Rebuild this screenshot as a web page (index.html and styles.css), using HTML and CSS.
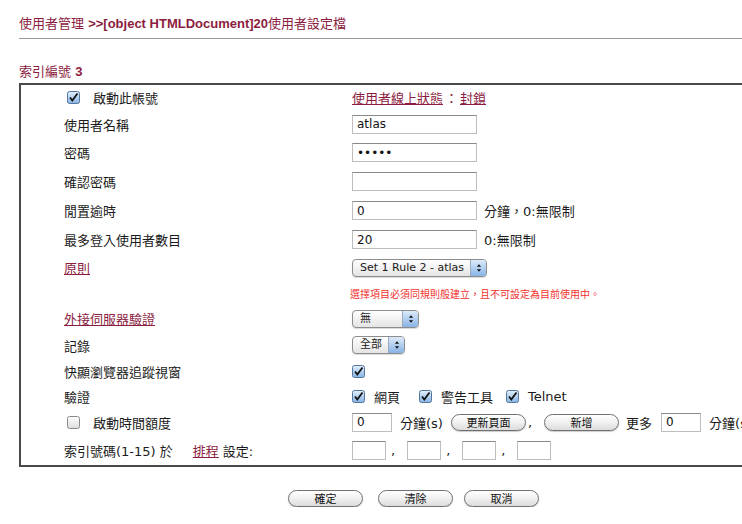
FILE: index.html
```html
<!DOCTYPE html>
<html>

<head>
  <meta charset="utf-8" />
  <title>使用者設定檔</title>
  <link rel="stylesheet" href="styles.css">
</head>

<body>
  <div class="page">
    <div class="title">使用者管理 <b>&gt;&gt;[object HTMLDocument]20</b>使用者設定檔</div>
    <div class="rule"></div>
    <div class="section">索引編號 <b>3</b></div>

    <div class="box">
      <div class="row r1">
        <div class="label check-label">
          <svg class="cb" viewBox="0 0 13 13"><defs><linearGradient id="g1" x1="0" y1="0" x2="0" y2="1"><stop offset="0" stop-color="#e4f0fb"/><stop offset="1" stop-color="#86b3e3"/></linearGradient></defs><rect x="0.5" y="0.5" width="12" height="12" rx="2" fill="url(#g1)" stroke="#55779e"/><path d="M3 6.5 L5.3 9.5 L10.5 2.5" fill="none" stroke="#111" stroke-width="1.8"/></svg>
          <span>啟動此帳號</span>
        </div>
        <div class="value">
          <a href="#" class="link">使用者線上狀態</a><span class="colon">：</span><a href="#" class="link">封鎖</a>
        </div>
      </div>
      <div class="row r2">
        <div class="label">使用者名稱</div>
        <div class="value"><input class="text" type="text" value="atlas"></div>
      </div>
      <div class="row r3">
        <div class="label">密碼</div>
        <div class="value"><input class="text" type="password" value="atlas"></div>
      </div>
      <div class="row r3">
        <div class="label">確認密碼</div>
        <div class="value"><input class="text" type="text" value=""></div>
      </div>
      <div class="row r3">
        <div class="label">閒置逾時</div>
        <div class="value"><input class="text" type="text" value="0"><span class="hint">分鐘，0:無限制</span></div>
      </div>
      <div class="row r3">
        <div class="label">最多登入使用者數目</div>
        <div class="value"><input class="text" type="text" value="20"><span class="hint">0:無限制</span></div>
      </div>
      <div class="row r7">
        <div class="label"><a href="#" class="link">原則</a></div>
        <div class="value">
          <div class="select sel-rule"><span class="sel-text">Set 1 Rule 2 - atlas</span><span class="sel-arrow"><svg viewBox="0 0 7 11"><path d="M3.5 1 L6 4 L1 4 Z M3.5 10 L6 7 L1 7 Z" fill="#111"/></svg></span></div>
        </div>
      </div>
      <div class="row r8">
        <div class="label"></div>
        <div class="value note">選擇項目必須同規則般建立，且不可設定為目前使用中。</div>
      </div>
      <div class="row r9">
        <div class="label"><a href="#" class="link">外接伺服器驗證</a></div>
        <div class="value">
          <div class="select sel-none"><span class="sel-text">無</span><span class="sel-arrow"><svg viewBox="0 0 7 11"><path d="M3.5 1 L6 4 L1 4 Z M3.5 10 L6 7 L1 7 Z" fill="#111"/></svg></span></div>
        </div>
      </div>
      <div class="row r10">
        <div class="label">記錄</div>
        <div class="value">
          <div class="select sel-all"><span class="sel-text">全部</span><span class="sel-arrow"><svg viewBox="0 0 7 11"><path d="M3.5 1 L6 4 L1 4 Z M3.5 10 L6 7 L1 7 Z" fill="#111"/></svg></span></div>
        </div>
      </div>
      <div class="row r11">
        <div class="label">快顯瀏覽器追蹤視窗</div>
        <div class="value">
          <svg class="cb" viewBox="0 0 13 13"><rect x="0.5" y="0.5" width="12" height="12" rx="2" fill="url(#g1)" stroke="#55779e"/><path d="M3 6.5 L5.3 9.5 L10.5 2.5" fill="none" stroke="#111" stroke-width="1.8"/></svg>
        </div>
      </div>
      <div class="row r12">
        <div class="label">驗證</div>
        <div class="value">
          <svg class="cb" viewBox="0 0 13 13"><rect x="0.5" y="0.5" width="12" height="12" rx="2" fill="url(#g1)" stroke="#55779e"/><path d="M3 6.5 L5.3 9.5 L10.5 2.5" fill="none" stroke="#111" stroke-width="1.8"/></svg>
          <span class="opt web">網頁</span>
          <svg class="cb" viewBox="0 0 13 13"><rect x="0.5" y="0.5" width="12" height="12" rx="2" fill="url(#g1)" stroke="#55779e"/><path d="M3 6.5 L5.3 9.5 L10.5 2.5" fill="none" stroke="#111" stroke-width="1.8"/></svg>
          <span class="opt alert">警告工具</span>
          <svg class="cb" viewBox="0 0 13 13"><rect x="0.5" y="0.5" width="12" height="12" rx="2" fill="url(#g1)" stroke="#55779e"/><path d="M3 6.5 L5.3 9.5 L10.5 2.5" fill="none" stroke="#111" stroke-width="1.8"/></svg>
          <span class="opt">Telnet</span>
        </div>
      </div>
      <div class="row r13">
        <div class="label check-label">
          <svg class="cb" viewBox="0 0 13 13"><defs><linearGradient id="g2" x1="0" y1="0" x2="0" y2="1"><stop offset="0" stop-color="#ffffff"/><stop offset="1" stop-color="#dcdcdc"/></linearGradient></defs><rect x="0.5" y="0.5" width="12" height="12" rx="2" fill="url(#g2)" stroke="#8a8a8a"/></svg>
          <span>啟動時間額度</span>
        </div>
        <div class="value">
          <input class="text small" type="text" value="0">
          <span class="unit">分鐘(s)</span>
          <button class="pill pill-s">更新頁面</button>
          <span class="comma">,</span>
          <button class="pill pill-s add">新增</button>
          <span class="more">更多</span>
          <input class="text small" type="text" value="0">
          <span class="unit">分鐘(s)</span>
        </div>
      </div>
      <div class="row r14">
        <div class="label">索引號碼(1-15) 於<a href="#" class="link sched">排程</a> 設定:</div>
        <div class="value">
          <input class="text tiny" type="text"><span class="sep">,</span>
          <input class="text tiny" type="text"><span class="sep">,</span>
          <input class="text tiny" type="text"><span class="sep">,</span>
          <input class="text tiny" type="text">
        </div>
      </div>
    </div>

    <div class="actions">
      <button class="pill ok">確定</button>
      <button class="pill clear">清除</button>
      <button class="pill">取消</button>
    </div>
  </div>
</body>

</html>
```

FILE: styles.css
```css
html {
  overflow: hidden;
}

body {
  margin: 0;
  font-family: "DejaVu Sans", "Noto Sans CJK TC", sans-serif;
  font-size: 13px;
  color: #1a1a1a;
}

.page {
  width: 800px;
  padding: 16px 0 0 19px;
}

.title {
  color: #8c1c40;
  font-size: 13px;
  line-height: 16px;
}

.title b,
.section b {
  font-family: "Liberation Sans", "Noto Sans CJK TC", sans-serif;
  font-weight: bold;
}

.rule {
  height: 1px;
  background: #9a9a9a;
  margin-top: 6px;
}

.section {
  color: #8c1c40;
  font-size: 13px;
  line-height: 16px;
  margin-top: 25px;
}

.box {
  margin-top: 3px;
  border: 2px solid #4a4a4a;
  padding-left: 43px;
}

.row {
  display: grid;
  grid-template-columns: 288px 1fr;
  align-items: center;
}

.r1 { height: 25px; }
.r2 { height: 28px; }
.r3 { height: 29px; }
.r7 { height: 27px; }
.r8 { height: 25px; }
.r9 { height: 25px; }
.r10 { height: 28px; }
.r11 { height: 25px; }
.r12 { height: 24px; }
.r13 { height: 28px; }
.r14 { height: 29px; }

.label,
.value {
  display: flex;
  align-items: center;
  white-space: nowrap;
}

.check-label .cb {
  margin-left: 3px;
  margin-right: 13px;
}

.cb {
  width: 13px;
  height: 13px;
  flex: none;
}

.link {
  color: #8c1c40;
  text-decoration: underline;
}

.colon {
  color: #8c1c40;
  margin: 0 2px;
}

.text {
  box-sizing: border-box;
  width: 125px;
  height: 19px;
  margin: 0;
  padding: 0 4px;
  border: 1px solid #bdbdbd;
  border-top-color: #8a8a8a;
  font-family: "DejaVu Sans", "Noto Sans CJK TC", sans-serif;
  font-size: 12px;
  color: #111;
  background: #fff;
}

.text.small {
  width: 40px;
}

.text.tiny {
  width: 34px;
}

.hint {
  margin-left: 7px;
}

.note {
  color: #f0302c;
  font-size: 10px;
  margin-left: -2px;
}

.select {
  box-sizing: border-box;
  display: flex;
  height: 18px;
  border: 1px solid #8d8d8d;
  border-radius: 4px;
  background: linear-gradient(#ffffff, #e4e4e4);
  box-shadow: 0 1px 1px rgba(0, 0, 0, 0.15);
  overflow: hidden;
  font-size: 11px;
}

.sel-text {
  flex: 1;
  padding-left: 7px;
  line-height: 16px;
}

.sel-arrow {
  width: 15px;
  display: flex;
  align-items: center;
  justify-content: center;
  border-left: 1px solid #9aa9bb;
  background: linear-gradient(#dceafa, #88b4e6);
}

.sel-arrow svg {
  width: 6px;
  height: 10px;
}

.sel-rule { width: 135px; }
.sel-none { width: 67px; }
.sel-all { width: 53px; }

.opt {
  margin: 0 0 0 9px;
}

.opt.web {
  margin-right: 19px;
}

.opt.alert {
  margin-right: 13px;
}

.pill {
  box-sizing: border-box;
  width: 75px;
  height: 17px;
  padding: 0;
  border: 1px solid #707070;
  border-radius: 9px;
  background: linear-gradient(#ffffff, #f0f0f0 50%, #dcdcdc);
  box-shadow: 0 1px 1px rgba(0, 0, 0, 0.2);
  font-family: "Noto Sans CJK TC", sans-serif;
  font-size: 11px;
  line-height: 15px;
  color: #111;
}

.unit {
  margin-left: 8px;
}

.pill-s {
  margin-left: 8px;
}

.comma {
  margin-left: 2px;
}

.pill-s.add {
  margin-left: 12px;
}

.more {
  margin: 0 9px 0 7px;
}

.sched {
  margin-left: 20px;
  margin-right: 4px;
}

.sep {
  margin: 0 12px 0 5px;
}

.actions {
  display: flex;
  margin: 23px 0 0 269px;
}

.pill.ok {
  margin-right: 15px;
}

.pill.clear {
  margin-right: 11px;
}
```
